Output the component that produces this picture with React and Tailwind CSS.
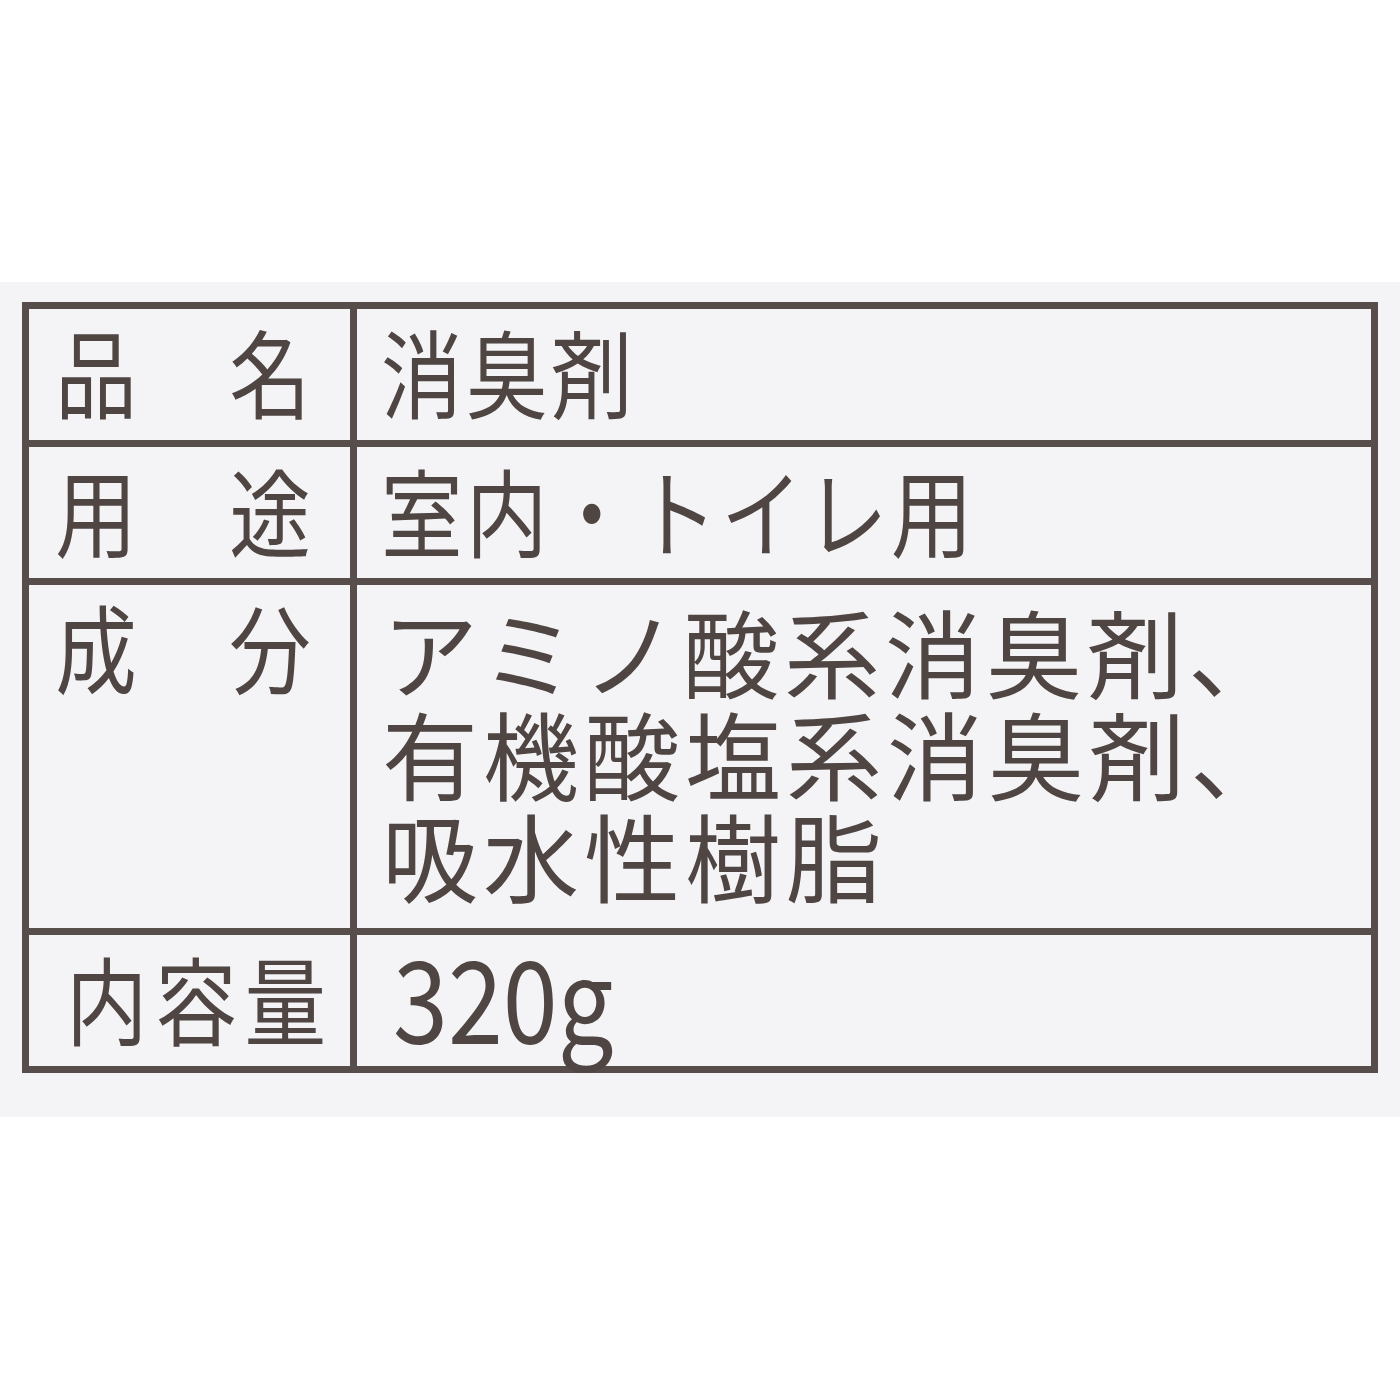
import React from "react";

const line = "border-[#574d4a]";

const App = () => {
  return (
    <div
      className="w-[1400px] h-[1400px] bg-white text-[#4f4542]"
      style={{ fontFamily: '"Noto Sans CJK JP", "Noto Sans", sans-serif' }}
    >
      <div className="h-[282px]" />

      {/* ラベル部分 */}
      <div className="h-[835px] bg-[#f4f4f6] pt-[20px] pl-[22px]">
        <div className={`w-[1356px] border-[7px] ${line}`}>
          {/* 品名 */}
          <div className={`flex h-[138px] border-b-[7px] ${line}`}>
            <div className={`w-[328px] shrink-0 border-r-[7px] ${line} flex items-center justify-between pb-[10px] pl-[19px] pr-[32px]`}>
              <span className="w-[96px] text-[96px] leading-none text-center scale-x-[0.85]">品</span>
              <span className="w-[96px] text-[96px] leading-none text-center scale-x-[0.85]">名</span>
            </div>
            <div className="flex-1 flex items-center pb-[10px] pl-[24px]">
              <div className="text-[96px] leading-none tracking-[4px] scale-x-[0.85] origin-left whitespace-nowrap">
                消臭剤
              </div>
            </div>
          </div>

          {/* 用途 */}
          <div className={`flex h-[138px] border-b-[7px] ${line}`}>
            <div className={`w-[328px] shrink-0 border-r-[7px] ${line} flex items-center justify-between pb-[8px] pl-[19px] pr-[32px]`}>
              <span className="w-[96px] text-[96px] leading-none text-center scale-x-[0.85]">用</span>
              <span className="w-[96px] text-[96px] leading-none text-center scale-x-[0.85]">途</span>
            </div>
            <div className="flex-1 flex items-center pb-[8px] pl-[24px]">
              <div className="text-[96px] leading-none tracking-[4px] scale-x-[0.85] origin-left whitespace-nowrap">
                室内・トイレ用
              </div>
            </div>
          </div>

          {/* 成分 */}
          <div className={`flex h-[350px] border-b-[7px] ${line}`}>
            <div className={`w-[328px] shrink-0 border-r-[7px] ${line} flex items-start justify-between pt-[12px] pl-[19px] pr-[32px]`}>
              <span className="w-[96px] text-[96px] leading-none text-center scale-x-[0.85]">成</span>
              <span className="w-[96px] text-[96px] leading-none text-center scale-x-[0.85]">分</span>
            </div>
            <div className="flex-1 flex flex-col pt-[14px] pl-[25px] text-[96px] leading-[102px] tracking-[5px] whitespace-nowrap">
              <div>アミノ酸系消臭剤、</div>
              <div>有機酸塩系消臭剤、</div>
              <div>吸水性樹脂</div>
            </div>
          </div>

          {/* 内容量 */}
          <div className="flex h-[131px]">
            <div className={`w-[328px] shrink-0 border-r-[7px] ${line} flex items-center pb-[8px] pl-[37px]`}>
              <span className="text-[96px] leading-none tracking-[9px] scale-x-[0.85] origin-left whitespace-nowrap">
                内容量
              </span>
            </div>
            <div className="flex-1 flex items-center pl-[36px] pb-[12px]">
              <div className="text-[115px] leading-none scale-x-[0.86] origin-left">320g</div>
            </div>
          </div>
        </div>
      </div>
    </div>
  );
};

export default App;
